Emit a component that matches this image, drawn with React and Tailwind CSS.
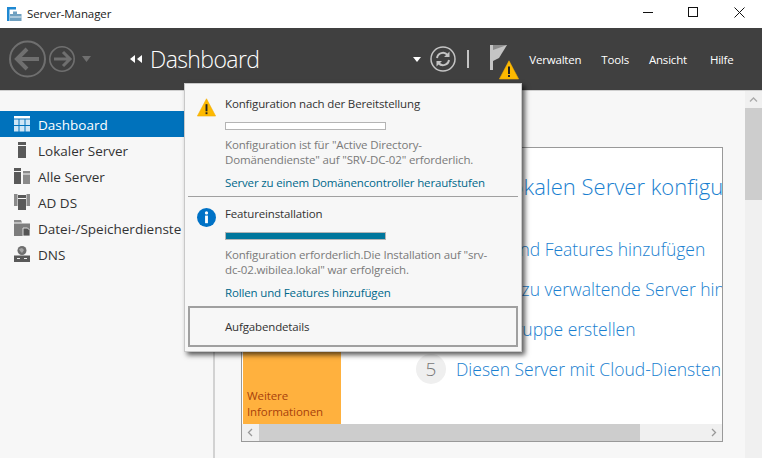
const Warn = ({ className }) => (
  <svg viewBox="0 0 20 20" className={className}>
    <path d="M10 .8 19.6 19H.4Z" fill="#fdb900" stroke="#f2ac00" strokeWidth=".6" />
    <rect x="9" y="6.5" width="2" height="7.5" fill="#222" />
    <rect x="9" y="15" width="2" height="2" fill="#222" />
  </svg>
);

const Nav = ({ children, active, icon }) => (
  <div className={`flex h-[26px] items-center pl-[14px] ${active ? "bg-[#0072bc] text-white" : "text-[#333]"}`}>
    <span className="mr-[8px] h-[16px] w-[16px]">{icon}</span>
    <span className="whitespace-nowrap pt-[2px] text-[13.5px]">{children}</span>
  </div>
);

const Step = ({ n, children }) => (
  <div className="flex h-[40px] items-center">
    <span className="flex h-[30px] w-[30px] shrink-0 items-center justify-center rounded-full bg-[#efefef] text-[19px] font-light text-[#777]">{n}</span>
    <span className="ml-[10px] whitespace-nowrap text-[17.5px] font-light text-[#1a7fd0]">{children}</span>
  </div>
);

const G = "#595959";
const icons = {
  dash: (
    <svg viewBox="0 0 16 16" className="h-4 w-4" fill="#cfe6f6">
      <rect x="0" y="0" width="16" height="2.5" fill="#fff" />
      <rect x="0" y="3.5" width="4.5" height="5.5" /><rect x="5.5" y="3.5" width="5" height="5.5" /><rect x="11.5" y="3.5" width="4.5" height="5.5" />
      <rect x="0" y="10" width="4.5" height="5.5" /><rect x="5.5" y="10" width="5" height="5.5" /><rect x="11.5" y="10" width="4.5" height="5.5" />
    </svg>
  ),
  local: (
    <svg viewBox="0 0 16 16" className="h-4 w-4" fill={G}><rect x="4" y="0" width="8" height="3" /><rect x="4" y="4" width="8" height="12" /></svg>
  ),
  all: (
    <svg viewBox="0 0 16 16" className="h-4 w-4"><rect x="0" y="0" width="7" height="3" fill={G} /><rect x="0" y="4" width="7" height="12" fill={G} /><rect x="9" y="3" width="7" height="2.5" fill="#8a8a8a" /><rect x="9" y="6.5" width="7" height="9.5" fill="#8a8a8a" /></svg>
  ),
  ad: (
    <svg viewBox="0 0 16 16" className="h-4 w-4"><rect x="0" y="0" width="3.5" height="12" fill="#8a8a8a" /><rect x="12.5" y="0" width="3.5" height="12" fill="#8a8a8a" /><rect x="4" y="1" width="8" height="3" fill={G} /><rect x="4" y="5" width="8" height="11" fill={G} /></svg>
  ),
  file: (
    <svg viewBox="0 0 16 16" className="h-4 w-4"><path d="M0 0h7l1 2.5H0Z" fill="#8a8a8a" /><rect x="0" y="3.5" width="16" height="12.5" fill="#7d7d7d" /><path d="M9 8h4.5L16 10.5V16H9Z" fill="#555" stroke="#f7f7f7" strokeWidth=".8" /></svg>
  ),
  dns: (
    <svg viewBox="0 0 16 16" className="h-4 w-4"><circle cx="8" cy="4.5" r="4.5" fill="#6f6f6f" /><path d="M5 3l3-1 2 2-2 3-2-2Z" fill="#a5a5a5" /><rect x="0" y="9.5" width="16" height="6.5" fill={G} /><rect x="3" y="12" width="3" height="1" fill="#eee" /><rect x="10" y="12" width="3" height="1" fill="#eee" /></svg>
  ),
};

export default function App() {
  return (
    <div className="relative h-[458px] w-[762px] overflow-hidden bg-white font-['Open_Sans',sans-serif]">
      {/* Title bar */}
      <div className="flex h-[28px] items-center bg-white">
        <svg viewBox="0 0 15 15" className="ml-[7px] h-[15px] w-[15px]">
          <rect x="0" y="0" width="2.5" height="14" fill="#1e88d2" />
          <rect x="0" y="0" width="9" height="2.5" fill="#1e88d2" />
          <path d="M6 4.5h4V7H14.5V14H3V7H6Z" fill="#6fa0c0" />
          <rect x="3" y="9.5" width="11.5" height="1" fill="#e8f0f5" />
        </svg>
        <span className="ml-[5px] text-[11.5px] tracking-[-0.1px] text-[#1a1a1a]">Server-Manager</span>
        <div className="ml-auto flex items-center">
          <svg viewBox="0 0 46 28" className="h-[28px] w-[46px]"><rect x="19" y="12" width="10" height="1" fill="#111" /></svg>
          <svg viewBox="0 0 46 28" className="h-[28px] w-[46px]"><rect x="18.5" y="7.5" width="9" height="9" fill="none" stroke="#111" /></svg>
          <svg viewBox="0 0 46 28" className="h-[28px] w-[46px]"><path d="M18.5 7.500l10 10m0-10-10 10" stroke="#111" fill="none" /></svg>
        </div>
      </div>

      {/* Dark header */}
      <div className="flex h-[62px] items-center bg-[#404040] text-white">
        <svg viewBox="0 0 100 40" className="ml-[9px] h-[40px] w-[100px]">
          <g stroke="#6f6f6f" fill="none">
            <circle cx="18.500" cy="20" r="17.500" strokeWidth="2" />
            <path d="M8 20H30M18 10 8 20l10 10" strokeWidth="4" />
            <circle cx="53" cy="20" r="12.200" strokeWidth="1.600" />
            <path d="M45 20H61M54 13l7 7-7 7" strokeWidth="3" />
          </g>
          <path d="M73 17h9l-4.500 6Z" fill="#6f6f6f" />
        </svg>
        <svg viewBox="0 0 12 8" className="ml-[21px] h-[8px] w-[12px]"><path d="M5 0v8L0 4ZM12 0v8L7 4Z" fill="#fff" /></svg>
        <span className="ml-[8px] text-[23px] font-light tracking-[-0.6px]">Dashboard</span>
        <svg viewBox="0 0 8 5" className="ml-[154px] h-[5px] w-[8px]"><path d="M0 0h8L4 5Z" fill="#fff" /></svg>
        <svg viewBox="0 0 26 26" className="ml-[9px] h-[26px] w-[26px]">
          <circle cx="13" cy="13" r="12" fill="none" stroke="#c4c4c4" strokeWidth="1.500" />
          <path d="M7 12a6 6 0 0 1 10.500-3M19 14a6 6 0 0 1-10.500 3" fill="none" stroke="#c4c4c4" strokeWidth="2" />
          <path d="M19.500 5.500v5.500H14ZM6.500 20.500V15H12Z" fill="#c4c4c4" />
        </svg>
        <span className="ml-[11px] h-[18px] w-[2px] bg-[#c4c4c4]" />
        <div className="relative ml-[21px] mt-[17px] h-[36px] w-[30px] self-start">
          <svg viewBox="0 0 18 25" className="absolute left-0 top-0 h-[25px] w-[18px]">
            <rect x="0" y="0" width="3" height="25" fill="#c4c4c4" />
            <path d="M3 0H17L9 13 3 16Z" fill="#c4c4c4" />
            <path d="M3 0H17L3 5Z" fill="#8c8c8c" />
          </svg>
          <Warn className="absolute left-[9px] top-[15px] h-[20px] w-[20px]" />
        </div>
        <nav className="ml-[9px] mt-[2px] flex text-[11.5px] font-medium tracking-[-0.2px]">
          <span>Verwalten</span>
          <span className="ml-[20px]">Tools</span>
          <span className="ml-[20px]">Ansicht</span>
          <span className="ml-[23px]">Hilfe</span>
        </nav>
      </div>

      {/* Body */}
      <div className="flex h-[368px] border-t border-[#cfcfcf] bg-[#f7f7f7]">
        <aside className="h-full w-[215px] shrink-0 border-r-2 border-[#d2d2d2] pt-[20px]">
          <Nav active icon={icons.dash}>Dashboard</Nav>
          <Nav icon={icons.local}>Lokaler Server</Nav>
          <Nav icon={icons.all}>Alle Server</Nav>
          <Nav icon={icons.ad}>AD DS</Nav>
          <Nav icon={icons.file}>Datei-/Speicherdienste</Nav>
          <Nav icon={icons.dns}>DNS</Nav>
        </aside>
        <main className="min-w-0 flex-1 pl-[26px] pt-[56px]">
          <div className="flex h-[295px] w-[482px] flex-col border border-[#999] bg-white">
            <div className="flex min-h-0 flex-1 overflow-hidden pl-[1px]">
              <div className="flex w-[98px] shrink-0 flex-col justify-end bg-[#ffb13e] px-[4px] pb-[4px] text-[11.5px] leading-[16px] tracking-[-0.1px] text-[#a8410c]">
                <span>Weitere</span>
                <span>Informationen</span>
              </div>
              <div className="min-w-0 pl-[75px] pt-[22px]">
                <div className="ml-[16px] whitespace-nowrap text-[22px] font-light text-[#1a7fd0]">Diesen lokalen Server konfigurieren</div>
                <div className="mt-[26px]">
                  <Step n="2">Rollen und Features hinzufügen</Step>
                  <Step n="3">Weitere zu verwaltende Server hinzufügen</Step>
                  <Step n="4">Servergruppe erstellen</Step>
                  <Step n="5">Diesen Server mit Cloud-Diensten verbinden</Step>
                </div>
              </div>
            </div>
            <div className="flex h-[17px] shrink-0 items-center bg-[#f0f0f0]">
              <svg viewBox="0 0 17 17" className="h-[17px] w-[17px]"><path d="M10 5 6.500 8.500 10 12" fill="none" stroke="#999" strokeWidth="1.300" /></svg>
              <div className="h-full w-[381px] bg-[#cdcdcd]" />
              <svg viewBox="0 0 17 17" className="ml-auto h-[17px] w-[17px]"><path d="M7 5l3.500 3.500L7 12" fill="none" stroke="#999" strokeWidth="1.300" /></svg>
            </div>
          </div>
        </main>
        <div className="h-full w-[17px] shrink-0 bg-[#f0f0f0]">
          <svg viewBox="0 0 17 17" className="h-[17px] w-[17px]"><path d="M5 10.500 8.500 7l3.500 3.500" fill="none" stroke="#aaa" strokeWidth="1.300" /></svg>
          <div className="h-[92px] w-full bg-[#cdcdcd]" />
        </div>
      </div>

      {/* Notification popup */}
      <div className="absolute left-[184px] top-[83px] h-[269px] w-[338px] border border-[#c8c8c8] bg-[#f7f7f7] px-[3px] text-[11.5px] tracking-[-0.15px] shadow-[3px_3px_5px_rgba(0,0,0,0.65)]">
        <section className="flex h-[113px] border-b border-[#a0a0a0] pl-[9px] pt-[12px]">
          <Warn className="mt-[2px] h-[19px] w-[19px] shrink-0" />
          <div className="ml-[9px]">
            <div className="leading-[16px] text-[#333]">Konfiguration nach der Bereitstellung</div>
            <div className="mt-[10px] h-[8px] w-[161px] border border-[#b4b4b4] bg-white" />
            <p className="mt-[7px] leading-[15px] text-[#7a7a7a]">Konfiguration ist für "Active Directory-<br />Domänendienste" auf "SRV-DC-02" erforderlich.</p>
            <a className="mt-[8px] block leading-[16px] text-[#00688b]">Server zu einem Domänencontroller heraufstufen</a>
          </div>
        </section>
        <section className="flex h-[109px] pl-[9px] pt-[9px]">
          <svg viewBox="0 0 20 20" className="mt-[2px] h-[19px] w-[19px] shrink-0">
            <circle cx="10" cy="10" r="10" fill="#0072c6" />
            <circle cx="10" cy="5.200" r="1.700" fill="#fff" />
            <rect x="8.500" y="8" width="3" height="8" fill="#fff" />
          </svg>
          <div className="ml-[9px]">
            <div className="leading-[16px] text-[#333]">Featureinstallation</div>
            <div className="mt-[10px] h-[8px] w-[161px] border border-[#b4b4b4] bg-[#00769c]" />
            <p className="mt-[7px] leading-[15px] text-[#7a7a7a]">Konfiguration erforderlich.Die Installation auf "srv-<br />dc-02.wibilea.lokal" war erfolgreich.</p>
            <a className="mt-[8px] block leading-[16px] text-[#00688b]">Rollen und Features hinzufügen</a>
          </div>
        </section>
        <div className="flex h-[41px] items-center border-2 border-[#a0a0a0] pl-[35px] pt-[1px] text-[#333]">Aufgabendetails</div>
      </div>
    </div>
  );
}
